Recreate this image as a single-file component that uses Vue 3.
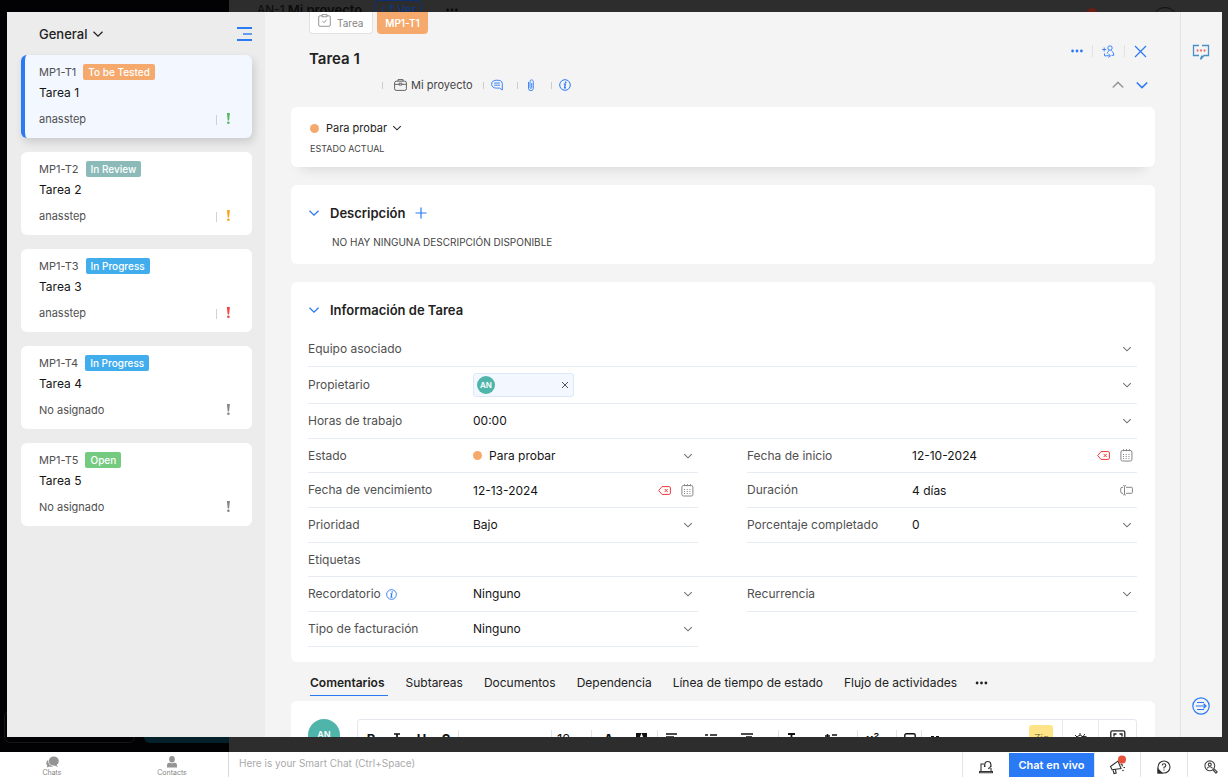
<script setup>
import { ref } from 'vue'

const tasks = [
  { id: 'MP1-T1', status: 'To be Tested', tone: 'orange', name: 'Tarea 1', owner: 'anasstep', priority: 'low', active: true },
  { id: 'MP1-T2', status: 'In Review', tone: 'teal', name: 'Tarea 2', owner: 'anasstep', priority: 'medium' },
  { id: 'MP1-T3', status: 'In Progress', tone: 'blue', name: 'Tarea 3', owner: 'anasstep', priority: 'high' },
  { id: 'MP1-T4', status: 'In Progress', tone: 'blue', name: 'Tarea 4', owner: 'No asignado', priority: 'none' },
  { id: 'MP1-T5', status: 'Open', tone: 'green', name: 'Tarea 5', owner: 'No asignado', priority: 'none' }
]

const fields = [
  { key: 'team', label: 'Equipo asociado', type: 'select', value: '', wide: true },
  { key: 'owner', label: 'Propietario', type: 'owner', wide: true, size: 'tall' },
  { key: 'hours', label: 'Horas de trabajo', type: 'select', value: '00:00', wide: true },
  { key: 'state', label: 'Estado', type: 'select', value: 'Para probar', dot: true, size: 'short' },
  { key: 'start', label: 'Fecha de inicio', type: 'date', value: '12-10-2024', size: 'short' },
  { key: 'due', label: 'Fecha de vencimiento', type: 'date', value: '12-13-2024' },
  { key: 'duration', label: 'Duración', type: 'duration', value: '4 días' },
  { key: 'priority', label: 'Prioridad', type: 'select', value: 'Bajo' },
  { key: 'percent', label: 'Porcentaje completado', type: 'select', value: '0' },
  { key: 'tags', label: 'Etiquetas', type: 'text', value: '', wide: true, size: 'short' },
  { key: 'reminder', label: 'Recordatorio', type: 'select', value: 'Ninguno', info: true },
  { key: 'recurrence', label: 'Recurrencia', type: 'select', value: '' },
  { key: 'billing', label: 'Tipo de facturación', type: 'select', value: 'Ninguno' }
]

const tabs = ['Comentarios', 'Subtareas', 'Documentos', 'Dependencia', 'Línea de tiempo de estado', 'Flujo de actividades']
const activeTab = ref('Comentarios')
</script>

<template>
  <div class="screen">
    <svg class="defs" aria-hidden="true">
      <symbol id="chev" viewBox="0 0 12 12"><path d="M1.500 3.800 6 8.200l4.500-4.400" fill="none" stroke="currentColor" stroke-width="1.300" /></symbol>
      <symbol id="info" viewBox="0 0 12 12">
        <circle cx="6" cy="6" r="5.300" fill="none" stroke="currentColor" stroke-width="1" />
        <circle cx="6.700" cy="3.300" r=".9" fill="currentColor" />
        <path d="M4.800 5.200h1.500L5.600 8.800h1.400" fill="none" stroke="currentColor" stroke-width="1.300" />
      </symbol>
      <symbol id="dots" viewBox="0 0 12 4">
        <circle cx="1.600" cy="2" r="1.400" fill="currentColor" /><circle cx="6" cy="2" r="1.400" fill="currentColor" /><circle cx="10.400" cy="2" r="1.400" fill="currentColor" />
      </symbol>
    </svg>

    <div class="stage">
      <div class="backdrop">
        <div class="back-nav">
          <span class="back-box"></span>
          <span class="back-box filled"></span>
        </div>
        <div class="back-page">
          <div class="back-head">
            <span class="back-code">AN-1</span>
            <span class="back-name">Mi proyecto</span>
            <span class="back-view">
              <svg width="12" height="12" viewBox="0 0 12 12" fill="none" stroke="currentColor"><path d="M4 2a4 4 0 0 0-1 7M8 10a4 4 0 0 0 1-7M7 5l4-4M8 1h3v3" /></svg>
              Ver
            </span>
            <svg class="back-dots" width="12" height="4"><use href="#dots" /></svg>
            <span class="back-alert"></span>
            <span class="back-avatar"></span>
          </div>
        </div>
      </div>

      <div class="dialog">
        <aside class="sidebar">
          <header class="side-head">
            <button class="view-name">General <svg width="12" height="12"><use href="#chev" /></svg></button>
            <button class="plain menu" aria-label="Cambiar vista">
              <svg width="15" height="14" viewBox="0 0 15 14" stroke="#2a7af5" stroke-width="2"><path d="M0 1h15M0 13h15" /><path d="M6 7h9" stroke-width="1.400" /></svg>
            </button>
          </header>
          <ul class="cards">
            <li v-for="t in tasks" :key="t.id" class="task" :class="{ active: t.active }">
              <div class="task-top"><span>{{ t.id }}</span><span class="tag" :class="t.tone">{{ t.status }}</span></div>
              <div class="task-name">{{ t.name }}</div>
              <div class="task-foot">
                <span>{{ t.owner }}</span>
                <svg class="prio" :class="t.priority" width="16" height="12" viewBox="0 0 16 12">
                  <path v-if="t.priority !== 'none'" d="M2.500 2v10" stroke="#d2d2d2" />
                  <path d="M12.900 0h3l-.8 7.500h-1.400z" fill="currentColor" /><circle cx="14.400" cy="9.700" r="1.300" fill="currentColor" />
                </svg>
              </div>
            </li>
          </ul>
        </aside>

        <main class="detail">
          <div class="chips">
            <span class="chip kind">
              <svg width="13" height="13" viewBox="0 0 13 13" fill="none" stroke="#8b8b8b" stroke-width=".9"><path d="M4 1.800H2A1.300 1.300 0 0 0 .7 3v8A1.300 1.300 0 0 0 2 12.300h9a1.300 1.300 0 0 0 1.300-1.300V3A1.300 1.300 0 0 0 11 1.800H9M4 .6h5v2.200H4zM4.500 7.200l1.500 1.500 2.600-3" /></svg>
              Tarea
            </span>
            <span class="chip code">MP1-T1</span>
          </div>

          <div class="title-row">
            <h1>Tarea 1</h1>
            <div class="actions">
              <button class="plain" aria-label="Más"><svg width="12" height="4"><use href="#dots" /></svg></button>
              <i class="bar"></i>
              <button class="plain" aria-label="Añadir seguidor">
                <svg width="13" height="13" viewBox="0 0 13 13" fill="none" stroke="currentColor" stroke-width=".9"><circle cx="8" cy="3" r="2.200" /><path d="M7 5c.2 1.500-1.500 1.500-1.800 3.500M9.300 5c0 1.600 2.300 1.200 2.500 5.300H9.500M2.200 2.500v4M.2 4.500h4M2.500 8.500v2.300h5.700M6.500 9l1.900 1.800-1.900 1.700" /></svg>
              </button>
              <i class="bar"></i>
              <button class="plain" aria-label="Cerrar"><svg width="13" height="13" viewBox="0 0 13 13"><path d="m1 1 11 11M12 1 1 12" stroke="currentColor" stroke-width="1.200" /></svg></button>
            </div>
          </div>

          <div class="meta-row">
            <i class="tick"></i>
            <a class="project" href="#proyecto">
              <svg width="13" height="12" viewBox="0 0 13 12" fill="none" stroke="#555" stroke-width=".9"><rect x=".6" y="2.200" width="11.800" height="9.200" rx="1.600" /><path d="M4 2V.6h5V2M.6 5.300h4.600M7.800 5.300h4.600M5.200 4.200h2.600v1.900H5.200z" /></svg>
              Mi proyecto
            </a>
            <i class="tick"></i>
            <button class="plain" aria-label="Comentarios"><svg width="12" height="12" viewBox="0 0 12 12" fill="none" stroke="currentColor" stroke-width=".9"><path d="M11.300 11V4.500C11.300 2 9 1.200 6 1.200S.6 2.200.6 5s2 4.100 5 4.100h3zM3 4h6M3 6.200h6" /></svg></button>
            <i class="tick"></i>
            <button class="plain" aria-label="Adjuntos"><svg width="12" height="12" viewBox="0 0 12 12" fill="none" stroke="currentColor" stroke-width=".9"><path d="M3.500 3v6.300a2.200 2.200 0 0 0 4.800 0V2.600C8.300.4 5 .2 5 2.600v6c0 1.200 1.700 1.200 1.700 0V4" /></svg></button>
            <i class="tick"></i>
            <button class="plain" aria-label="Información"><svg width="12" height="12"><use href="#info" /></svg></button>
            <div class="pager">
              <button class="plain prev" aria-label="Anterior"><svg class="up" width="14" height="14"><use href="#chev" /></svg></button>
              <button class="plain" aria-label="Siguiente"><svg width="14" height="14"><use href="#chev" /></svg></button>
            </div>
          </div>

          <section class="panel status">
            <button class="state"><i class="dot"></i>Para probar<svg width="10" height="10"><use href="#chev" /></svg></button>
            <p>ESTADO ACTUAL</p>
          </section>

          <section class="panel description">
            <h2>
              <svg class="fold" width="12" height="12"><use href="#chev" /></svg>Descripción
              <button class="plain" aria-label="Añadir descripción"><svg width="12" height="12" viewBox="0 0 12 12"><path d="M6 .5v11M.5 6h11" stroke="currentColor" stroke-width="1.200" /></svg></button>
            </h2>
            <p>NO HAY NINGUNA DESCRIPCIÓN DISPONIBLE</p>
          </section>

          <section class="panel information">
            <h2><svg class="fold" width="12" height="12"><use href="#chev" /></svg>Información de Tarea</h2>
            <div class="fields">
              <div v-for="f in fields" :key="f.key" class="field" :class="[{ wide: f.wide }, f.size]">
                <label :for="f.key">{{ f.label }}<svg v-if="f.info" class="hint" width="11" height="11"><use href="#info" /></svg></label>
                <div class="control">
                  <template v-if="f.type === 'select'">
                    <i v-if="f.dot" class="dot"></i>
                    <select :id="f.key"><option>{{ f.value }}</option></select>
                    <svg class="caret" width="10" height="10"><use href="#chev" /></svg>
                  </template>
                  <template v-else-if="f.type === 'owner'">
                    <span class="person">
                      <span class="face">AN</span>
                      <button class="plain" aria-label="Quitar"><svg width="8" height="8" viewBox="0 0 8 8"><path d="m1 1 6 6M7 1 1 7" stroke="#555" /></svg></button>
                    </span>
                    <input :id="f.key" type="text">
                    <svg class="caret" width="10" height="10"><use href="#chev" /></svg>
                  </template>
                  <template v-else>
                    <input :id="f.key" type="text" :value="f.value">
                    <template v-if="f.type === 'date'">
                      <button class="plain clear" aria-label="Borrar fecha"><svg width="13" height="9" viewBox="0 0 13 9" fill="none" stroke="#ee3b3b" stroke-width="1"><path d="M4 .6h7.200q1.200 0 1.200 1.200v5.400q0 1.200-1.200 1.200H4L.7 4.500zM6.700 3l3 3M9.700 3l-3 3" /></svg></button>
                      <button class="plain cal" aria-label="Elegir fecha"><svg width="13" height="13" viewBox="0 0 13 13" fill="none" stroke="#858585"><rect x=".9" y="1.500" width="11" height="10.500" rx="1.600" /><path d="M3.500.2v2M6.500.2v2M9.500.2v2" /><path d="M3 5.500h8M3 7.500h8M3 9.500h8" stroke-dasharray="1 1.700" /></svg></button>
                    </template>
                    <svg v-else-if="f.type === 'duration'" width="13" height="11" viewBox="0 0 13 11" fill="none" stroke="#858585"><path d="M3 2.300H2Q.7 2.300.7 4v2.300Q.7 8.300 2 8.300h1M6 2.300h5.500q.9 0 .9.900v4.200q0 .9-.9.900H6M3.200.5q1.300 0 1.300 1v7.600q0 1-1.300 1M5.800.5q-1.300 0-1.300 1M5.800 10.100q-1.300 0-1.300-1" /></svg>
                  </template>
                </div>
              </div>
            </div>
          </section>

          <nav class="tabs">
            <button v-for="t in tabs" :key="t" class="tab" :class="{ current: t === activeTab }" @click="activeTab = t">{{ t }}</button>
            <button class="tab more" aria-label="Más pestañas"><svg width="13" height="4"><use href="#dots" /></svg></button>
          </nav>

          <section class="panel comments">
            <span class="avatar">AN</span>
            <div class="editor">
              <button class="tool"><b>B</b></button>
              <button class="tool" aria-label="Cursiva"><svg width="6" height="12" viewBox="0 0 6 12"><path d="M0 1h6M3 1v11M0 11h6" stroke="#111" stroke-width="1.700" /></svg></button>
              <button class="tool"><b>U</b></button>
              <button class="tool sep"><b>S</b></button>
              <button class="tool sep" aria-label="Fuente"></button>
              <button class="tool sep size">12</button>
              <button class="tool"><b>A</b></button>
              <button class="tool sep" aria-label="Color de fondo"><svg width="11" height="13" viewBox="0 0 11 13"><path d="M0 0h11v13H0z" fill="#111" /><path d="m2.500 10 3-8 3 8" fill="none" stroke="#fff" stroke-width="1.500" /></svg></button>
              <button class="tool left" aria-label="Alinear"><svg width="12" height="13" viewBox="0 0 12 13" stroke="#111" stroke-width="1.600"><path d="M0 1h11M0 4h8M0 7h11M0 10h8" /></svg></button>
              <button class="tool" aria-label="Lista"><svg width="12" height="13" viewBox="0 0 12 13" stroke="#111" stroke-width="1.600"><path d="M0 2h3M5 2h7M0 7h3M5 7h7" /></svg></button>
              <button class="tool sep left" aria-label="Sangría"><svg width="12" height="13" viewBox="0 0 12 13" stroke="#111" stroke-width="1.500"><path d="M0 1h12M5 4h6M5 7h6M0 10h12" /></svg></button>
              <button class="tool" aria-label="Formato"><svg width="8" height="13" viewBox="0 0 8 13" stroke="#111" stroke-width="1.800"><path d="M0 1h7M3.500 1v11" /></svg></button>
              <button class="tool sep" aria-label="Interlineado"><svg width="12" height="13" viewBox="0 0 12 13" stroke="#111" stroke-width="1.500"><path d="M2.500 1v11M0 3h5M7 2h5M7 6h5M7 10h5" /></svg></button>
              <button class="tool sep left power">x²</button>
              <button class="tool sep" aria-label="Imagen"><svg width="12" height="13" viewBox="0 0 12 13" fill="none" stroke="#111" stroke-width="1.400"><rect x=".8" y=".8" width="10.400" height="11" rx="1.500" /><path d="m3 9 3-3 3 3" /></svg></button>
              <button class="tool" aria-label="Cita"><svg width="8" height="13" viewBox="0 0 8 13" fill="#111"><path d="M0 3h3v3L1.500 8H0zM5 3h3v3L6.500 8H5z" /></svg></button>
              <button class="tool tall-sep zia"><span>Zia</span></button>
              <button class="tool tall-sep" aria-label="Tema"><svg width="14" height="14" viewBox="0 0 14 14" fill="none" stroke="#222"><path d="M6 0v2M1 2l2 2M11 1 9.500 2.700M0 7h2" /><path d="M3 8a3.500 3.500 0 0 1 6-4" /><circle cx="10" cy="7" r="3.800" fill="#222" /></svg></button>
              <button class="tool full" aria-label="Pantalla completa"><svg width="16" height="16" viewBox="0 0 16 16" fill="none" stroke="#222" stroke-width="1.300"><rect x=".8" y=".8" width="14" height="14" rx="1.500" /><path d="M4 6.500V4h2.500M9.500 4H12v2.500M4 9.500V12h2.500M9.500 12H12V9.500" /></svg></button>
            </div>
          </section>
        </main>

        <aside class="rail">
          <button class="plain" aria-label="Comentarios del equipo">
            <svg width="18" height="16" viewBox="0 0 18 16" fill="none"><path d="M7 1.500H1.500v10H7M10 1.500h6.500v10H12L8.500 15.500M10 11.500 8.500 15" stroke="#4a90c8" stroke-width="1.300" /><path d="M4.700 6.500h1.700M8.200 6.500h1.700M11.700 6.500h1.700" stroke="#f05a5a" stroke-width="1.800" /></svg>
          </button>
          <button class="plain" aria-label="Expandir panel">
            <svg width="18" height="18" viewBox="0 0 18 18" fill="none" stroke="#2a7af5" stroke-width="1.200"><circle cx="9" cy="9" r="8.200" /><path d="M5 5.500h7M3.800 9h10M5 12.500h7M11.500 6.700 14 9l-2.500 2.300" /></svg>
          </button>
        </aside>
      </div>
    </div>

    <footer class="chatbar">
      <div class="chat-nav">
        <button class="mini"><svg width="13" height="12" viewBox="0 0 13 12" fill="#949494"><ellipse cx="7.800" cy="5" rx="5" ry="4.600" /><path d="M10 8.500 12.300 11 8 9.500zM2.200 4C-.5 6 0 8.500 1.300 9.500L.8 11.500 3.500 10.500C5 11 6.500 10.600 7.500 10.200 4 10 2 8 2.200 4z" /></svg>Chats</button>
        <button class="mini"><svg width="12" height="12" viewBox="0 0 12 12" fill="#949494"><ellipse cx="6" cy="3.300" rx="2.800" ry="3.300" /><path d="M1 11.500V9Q1 6.500 4 6.700q2 1.200 4 0Q11 6.500 11 9v2.500z" /></svg>Contacts</button>
      </div>
      <input class="smart" type="text" aria-label="Smart Chat" placeholder="Here is your Smart Chat (Ctrl+Space)">
      <div class="tray">
        <button class="tray-item" aria-label="Soporte"><svg width="14" height="14" viewBox="0 0 14 14" fill="none" stroke="#333" stroke-width="1.100"><path d="M5 4H2v7.500M12 8v3.500M.5 12.800h13v-1.300H.5zM5.800 6V4.500a3 3 0 0 1 6 0V6M5.500 4.500v2h1M12 4.500v2h-1M11.500 6.500Q11 8.500 9 8.500" /></svg></button>
        <button class="live">Chat en vivo</button>
        <button class="tray-item news" aria-label="Novedades"><svg width="20" height="20" viewBox="0 0 20 20" fill="none" stroke="#333" stroke-width="1.100"><path d="M2.500 11.500 10 6l3 7.500-9 1.200zM5 15l1 3.500 2.200-.5-.8-3.300M12.500 9q2.500 0 1.500 2.500M15.500 12.500h1.500M14.500 15l1 1" /><circle cx="14" cy="4.500" r="4" fill="#e8503a" stroke="none" /></svg></button>
        <button class="tray-item" aria-label="Ayuda"><svg width="14" height="14" viewBox="0 0 14 14" fill="none" stroke="#333" stroke-width="1.100"><path d="M1 13V7a6 6 0 1 1 6 6z" /><path d="M1 9v4h4z" fill="#222" /><path d="M5.200 5.600q0-1.900 1.800-1.900t1.800 1.700Q8.800 6.700 7 7.300v1.200M7 9.500v1.100" /></svg></button>
        <button class="tray-item last" aria-label="Buscar"><svg width="14" height="14" viewBox="0 0 14 14" fill="none" stroke="#444" stroke-width="1.100"><circle cx="5.800" cy="5.800" r="4.900" /><circle cx="5.800" cy="4.600" r="1.500" /><path d="M3 8.300q2.800-3 5.600 0M9 10l3 3.200 1.300-1.400L10 9" /></svg></button>
      </div>
    </footer>
  </div>
</template>

<style>
body { background: #2d2d2d; }
</style>

<style scoped>
* { box-sizing: border-box; }
.screen { height: 100vh; display: flex; flex-direction: column; overflow: hidden; font-family: Inter, "Liberation Sans", sans-serif; font-size: 12px; line-height: 16px; color: #222; }
.defs { position: absolute; width: 0; height: 0; }
button, input, select { font: inherit; color: inherit; background: none; border: 0; padding: 0; margin: 0; outline: 0; }
h1, h2, p, ul { margin: 0; padding: 0; }
svg { display: block; flex: none; }
.plain { display: flex; color: #2a7af5; }
.stage { position: relative; flex: 1; min-height: 0; padding: 12px 6px 15px 7px; display: flex; }

.backdrop { position: absolute; inset: 0; display: grid; grid-template-columns: 229px 1fr; background: #2d2d2d; }
.back-nav { background: #020204; display: flex; align-items: flex-end; gap: 9px; padding: 0 0 9px 4px; overflow: hidden; }
.back-box { width: 131px; height: 32px; border: 1px solid #17171a; border-radius: 6px; flex: none; }
.back-box.filled { background: #04202b; border: 0; }
.back-head { height: 20px; padding-left: 28px; display: flex; align-items: center; color: #0b0b0b; }
.back-name { font-size: 13px; font-weight: 600; margin-left: 3px; }
.back-view { display: flex; align-items: center; gap: 4px; height: 20px; width: 46px; border: 1px solid #0b2f70; border-radius: 3px; margin-left: 13px; padding-left: 5px; color: #0b3a8c; }
.back-dots { margin-left: 25px; }
.back-alert { width: 12px; height: 12px; border-radius: 50%; background: #6a1d14; margin: 8px 0 0 auto; }
.back-avatar { width: 26px; height: 26px; border: 1px solid #111; border-radius: 50%; margin: 20px 50px 0 54px; }

.dialog { position: relative; flex: 1; min-width: 0; display: grid; grid-template-columns: 258px minmax(0, 1fr) 42px; background: #f4f4f4; overflow: hidden; }
.sidebar { background: #ececec; padding: 0 13px 0 14px; }
.side-head { height: 43px; display: flex; align-items: center; justify-content: space-between; padding-left: 18px; }
.view-name { display: flex; align-items: center; gap: 5px; font-size: 13px; font-weight: 500; }
.cards { list-style: none; display: flex; flex-direction: column; gap: 14px; }
.task { height: 83px; padding: 9px 22px 0 18px; background: #fff; border-radius: 6px; color: #505050; font-size: 11px; }
.task.active { background: #f3f7ff; border-left: 4px solid #2a7af5; padding-left: 14px; box-shadow: 2px 4px 8px rgba(0, 0, 0, .14); }
.task-top { display: flex; align-items: center; gap: 7px; height: 16px; }
.tag { color: #fff; border-radius: 2px; padding: 0 5px; font-size: 10px; font-weight: 500; line-height: 16px; }
.orange { background: #f6a96d; }
.teal { background: #8bbab9; }
.blue { background: #42adec; }
.green { background: #74cb80; }
.task-name { color: #151515; font-size: 12px; margin-top: 5px; }
.task-foot { display: flex; justify-content: space-between; align-items: center; margin-top: 10px; }
.prio.low { color: #55b95d; }
.prio.medium { color: #f5a623; }
.prio.high { color: #f04444; }
.prio.none { color: #858585; }

.detail { padding: 0 25px 0 26px; min-width: 0; min-height: 0; overflow: hidden; }
.chips { display: flex; gap: 4px; padding-left: 18px; height: 22px; }
.chip { display: flex; align-items: center; border-radius: 0 0 4px 4px; height: 22px; font-size: 10px; }
.kind { background: #fff; border: 1px solid #e2e2e2; border-top: 0; color: #858585; width: 64px; padding-left: 8px; gap: 6px; }
.kind svg { margin-bottom: 4px; }
.code { background: #f6a96d; color: #fff; font-weight: 600; width: 51px; justify-content: center; }
.title-row { display: flex; justify-content: space-between; height: 38px; padding: 12px 8px 0 18px; }
h1 { font-size: 15px; line-height: 26px; font-weight: 600; }
.actions { display: flex; align-items: center; gap: 9px; height: 14px; margin-top: -2px; }
.bar { width: 1px; height: 12px; background: #e2e2e2; }
.meta-row { display: flex; align-items: center; height: 26px; padding: 0 6px 0 91px; margin-bottom: 9px; }
.tick { width: 1px; height: 7px; background: #ccc; }
.project { display: flex; align-items: center; gap: 4px; margin: 0 10px 0 11px; color: #444; text-decoration: none; font-size: 11px; }
.meta-row > .plain { margin: 0 14px 0 7px; }
.pager { display: flex; gap: 10px; margin-left: auto; }
.prev { color: #999; }
.up { transform: rotate(180deg); }

.panel { background: #fff; border-radius: 6px; }
.status { height: 60px; padding: 13px 19px 0; margin-bottom: 18px; box-shadow: 0 12px 12px -10px rgba(0, 0, 0, .12); }
.state { display: flex; align-items: center; gap: 5px; font-size: 11px; line-height: 16px; }
.dot { width: 9px; height: 9px; border-radius: 50%; background: #f6a96d; flex: none; margin-right: 2px; }
.status p { font-size: 9px; color: #444; margin-top: 5px; }
.description { height: 79px; margin-bottom: 18px; padding: 18px 17px 0; }
.description p { font-size: 10px; color: #444; margin: 11px 0 0 24px; }
h2 { display: flex; align-items: center; font-size: 13px; font-weight: 600; line-height: 20px; height: 20px; }
.fold { color: #2a7af5; margin-right: 10px; }
h2 .plain { margin-left: 10px; }
.information { height: 380px; padding: 18px 18px 0 17px; }
.fields { display: grid; grid-template-columns: minmax(0, 1fr) minmax(0, 1fr); column-gap: 49px; margin-top: 12px; }
.field { height: 35px; border-bottom: 1px solid #e7ebf2; display: flex; align-items: center; }
.field.wide { grid-column: 1 / -1; }
.tall { height: 37px; }
.short { height: 34px; }
label { width: 165px; flex: none; color: #505050; display: flex; align-items: center; }
.hint { color: #2a7af5; margin-left: 5px; }
.control { flex: 1; min-width: 0; display: flex; align-items: center; padding-right: 4px; }
.control .dot { margin-right: 7px; }
select, .control input { flex: 1; min-width: 0; appearance: none; color: #151515; height: 20px; }
.caret { color: #707070; margin-right: 1px; }
.clear { margin-right: 10px; }
.person { display: flex; align-items: center; justify-content: space-between; width: 101px; height: 24px; background: #f3f7ff; border: 1px solid #dde7f8; border-radius: 3px; padding: 0 4px 0 3px; }
.face { width: 18px; height: 18px; border-radius: 50%; background: #4fb5ab; color: #fff; font-size: 8px; font-weight: 600; line-height: 18px; text-align: center; }

.tabs { display: flex; gap: 21px; height: 39px; padding: 0 19px; align-items: flex-start; }
.tab { height: 34px; padding: 8px 0 0; border-bottom: 1px solid transparent; white-space: nowrap; color: #222; }
.current { font-weight: 600; border-color: #2a7af5; padding-right: 3px; margin-right: -3px; }
.more { padding-top: 8px; margin-left: -3px; }
.comments { display: flex; gap: 17px; height: 80px; padding: 18px 18px 0 17px; border-radius: 6px 6px 0 0; }
.avatar { width: 32px; height: 32px; border-radius: 50%; background: #4fb5ab; color: #fff; font-size: 9px; font-weight: 600; line-height: 32px; text-align: center; flex: none; }
.editor { flex: 1; height: 46px; border: 1px solid #e4e6f0; border-radius: 3px; display: grid; grid-template-columns: 26px 26px 23px 26px 93px 40px 33px 33px 31px 44px 46px 25px 54px 39px 25px 26px 1fr 36px 37px; }
.tool { display: flex; justify-content: center; padding-top: 12px; font-size: 13px; line-height: 14px; color: #111; }
.tool svg { margin-top: 1px; }
.sep { box-shadow: inset -1px 0 0 #e2e2e2; height: 30px; margin-top: 10px; padding-top: 2px; }
.left { justify-content: flex-start; padding-left: 8px; }
.power { font-weight: 600; }
.size { justify-content: flex-start; padding-left: 5px; }
.tall-sep { border-right: 1px solid #e8e8ee; }
.zia { justify-content: flex-end; padding: 5px 9px 0 0; }
.zia span { width: 24px; height: 26px; padding-top: 6px; background: #fee487; border-radius: 3px; color: #8a7a45; font-size: 10px; font-style: italic; }
.full { padding-top: 9px; }

.rail { border-left: 1px solid #e2e2e2; display: flex; flex-direction: column; align-items: center; justify-content: space-between; padding: 32px 1px 22px 0; }

.chatbar { height: 25px; background: #fff; display: grid; grid-template-columns: 229px minmax(0, 1fr) auto; overflow: hidden; position: relative; }
.chat-nav { display: flex; border-right: 1px solid #d8d8d8; gap: 16px; }
.mini { display: flex; flex-direction: column; align-items: center; gap: 0; padding-top: 4px; font-size: 7px; line-height: 9px; color: #858585; width: 104px; }
.smart { font-size: 10px; padding: 0 10px 3px; align-self: center; }
.smart::placeholder { color: #aaa; opacity: 1; }
.tray { display: flex; }
.tray-item { width: 47px; border-left: 1px solid #e4e4e4; display: flex; align-items: center; justify-content: center; padding-top: 4px; }
.tray-item.news { padding-top: 0; width: 46px; }
.tray-item.last { width: 41px; padding-left: 6px; }
.live { background: #2a7af5; color: #fff; font-size: 11px; font-weight: 600; width: 85px; margin-top: 1px; }
</style>
